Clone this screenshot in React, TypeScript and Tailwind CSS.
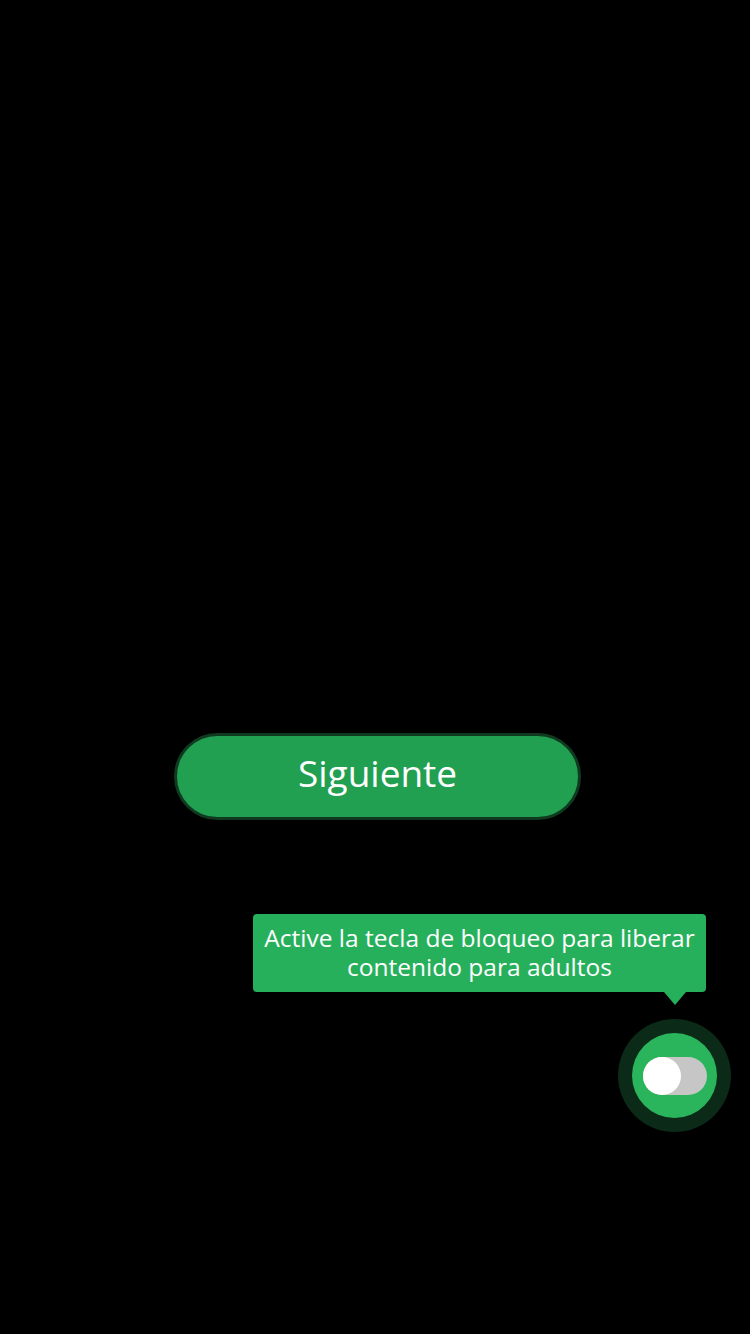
export default function App() {
  return (
    <div className="min-h-[1334px] w-[750px] bg-black flex flex-col font-['Open_Sans',sans-serif] text-white">
      <button className="mt-[733px] ml-[174px] w-[407px] h-[87px] rounded-full border-[3px] border-[#0f3a20] bg-[#22a052] flex items-center justify-center">
        <span className="text-[37px] leading-none -mt-[8px]">Siguiente</span>
      </button>

      <div className="mt-[94px] ml-[253px] w-[453px] flex flex-col">
        <div className="h-[78px] rounded-[4px] bg-[#27b05b] flex items-center justify-center text-center">
          <p className="text-[24.5px] leading-[29px] -mt-[2px] whitespace-nowrap">
            Active la tecla de bloqueo para liberar
            <br />
            contenido para adultos
          </p>
        </div>
        <span className="ml-[411px] w-0 h-0 border-x-[11px] border-x-transparent border-t-[13px] border-t-[#27b05b]" />
      </div>

      <div className="mt-[14px] ml-[618px] w-[113px] h-[113px] rounded-full bg-[#0b2a17] p-[14px]">
        <div className="w-full h-full rounded-full bg-[#2ab55c] flex items-center justify-center">
          <div className="w-[64px] h-[38px] rounded-full bg-[#c6c6c6] flex items-center">
            <span className="w-[38px] h-[38px] rounded-full bg-white" />
          </div>
        </div>
      </div>
    </div>
  );
}
